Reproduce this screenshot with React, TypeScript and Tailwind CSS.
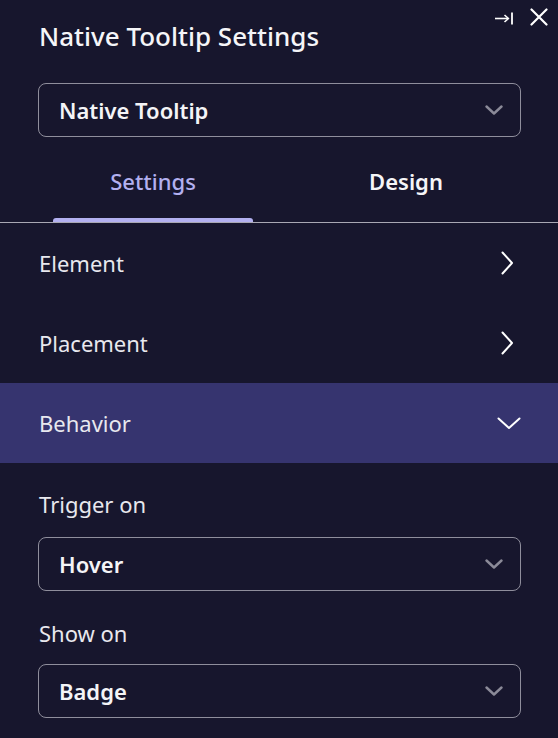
import { useState } from 'react';

type Tab = 'settings' | 'design';

function ChevronDown({ className = '' }: { className?: string }) {
  return (
    <svg width="18" height="10" viewBox="0 0 18 10" fill="none" className={className}>
      <path d="M1.5 1.5 L9 8.5 L16.5 1.5" stroke="currentColor" strokeWidth="2.4" strokeLinecap="round" strokeLinejoin="round" />
    </svg>
  );
}

function Select({ value }: { value: string }) {
  return (
    <div className="h-[54px] ml-[38px] mr-[37px] rounded-[8px] border border-[#8f8e9c] flex items-center justify-between pl-[20px] pr-[17px]">
      <span className="text-[22px] leading-[30px] font-semibold text-[#f4f4f7]">{value}</span>
      <ChevronDown className="text-[#8b8a98]" />
    </div>
  );
}

function Row({ label, open = false }: { label: string; open?: boolean }) {
  return (
    <div
      className={`h-[80px] flex items-center justify-between pl-[39px] ${
        open ? 'bg-[#36346f] pr-[37px]' : 'pr-[44px]'
      }`}
    >
      <span className="text-[22px] leading-[30px] text-[#e8e8ee]">{label}</span>
      {open ? (
        <svg width="24" height="13" viewBox="0 0 24 13" fill="none" className="text-white">
          <path d="M1.5 1.5 L12 11 L22.5 1.5" stroke="currentColor" strokeWidth="2" strokeLinecap="round" strokeLinejoin="round" />
        </svg>
      ) : (
        <svg width="13" height="24" viewBox="0 0 13 24" fill="none" className="text-white">
          <path d="M1.5 1.5 L11 12 L1.5 22.5" stroke="currentColor" strokeWidth="2" strokeLinecap="round" strokeLinejoin="round" />
        </svg>
      )}
    </div>
  );
}

export default function App() {
  const [tab, setTab] = useState<Tab>('settings');

  return (
    <div
      className="w-[558px] h-[738px] bg-[#17162d] overflow-hidden relative"
      style={{ fontFamily: '"Noto Sans", "Open Sans", sans-serif' }}
    >
      {/* Top-right actions */}
      <div className="absolute top-[8px] right-[10px] flex items-start gap-[16px]">
        <svg width="20" height="14" viewBox="0 0 20 14" fill="none" className="text-white mt-[4px]">
          <path d="M1 6.5 H14" stroke="currentColor" strokeWidth="1.6" />
          <path d="M10.5 3 L14.5 6.5 L10.5 10" stroke="currentColor" strokeWidth="1.6" strokeLinejoin="round" />
          <path d="M18 0.5 V12.5" stroke="currentColor" strokeWidth="1.8" />
        </svg>
        <svg width="18" height="18" viewBox="0 0 18 18" fill="none" className="text-white">
          <path d="M1.5 1.5 L16.5 16.5 M16.5 1.5 L1.5 16.5" stroke="currentColor" strokeWidth="2.2" strokeLinecap="round" />
        </svg>
      </div>

      {/* Header */}
      <h1 className="pt-[19px] pl-[39px] text-[26px] leading-[35px] font-medium text-[#f5f5f8]">
        Native Tooltip Settings
      </h1>

      <div className="mt-[29px]">
        <Select value="Native Tooltip" />
      </div>

      {/* Tabs */}
      <div className="mt-[29px] flex pl-[53px] gap-[53px]">
        {(['settings', 'design'] as Tab[]).map((key) => {
          const active = tab === key;
          return (
            <button
              key={key}
              onClick={() => setTab(key)}
              className="w-[200px] flex flex-col items-center"
            >
              <span
                className={`text-[22px] leading-[30px] ${
                  active ? 'text-[#b3b0f0] font-medium' : 'text-[#f5f5f8] font-semibold'
                }`}
              >
                {key === 'settings' ? 'Settings' : 'Design'}
              </span>
              <span
                className={`mt-[22px] h-[4px] w-full rounded-t-[3px] ${active ? 'bg-[#b3b0f0]' : 'bg-transparent'}`}
              />
            </button>
          );
        })}
      </div>
      <div className="h-px bg-[#a9a8b4]" />

      {/* Sections */}
      <Row label="Element" />
      <Row label="Placement" />
      <Row label="Behavior" open />

      <div className="pt-[26px]">
        <p className="pl-[39px] text-[22px] leading-[30px] text-[#e8e8ee]">Trigger on</p>
        <div className="mt-[18px]">
          <Select value="Hover" />
        </div>
        <p className="mt-[27px] pl-[39px] text-[22px] leading-[30px] text-[#e8e8ee]">Show on</p>
        <div className="mt-[16px]">
          <Select value="Badge" />
        </div>
      </div>
    </div>
  );
}
